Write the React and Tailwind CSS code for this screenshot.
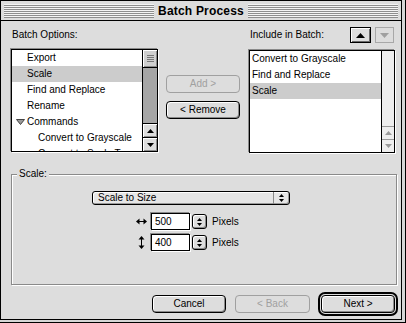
import React from "react";

const TriUp = ({ c = "#000", w = 7, h = 4 }) => (
  <svg width={w} height={h} viewBox={`0 0 ${w} ${h}`} className="block">
    <path d={`M0 ${h}L${w / 2} 0L${w} ${h}Z`} fill={c} />
  </svg>
);
const TriDown = ({ c = "#000", w = 7, h = 4 }) => (
  <svg width={w} height={h} viewBox={`0 0 ${w} ${h}`} className="block">
    <path d={`M0 0L${w} 0L${w / 2} ${h}Z`} fill={c} />
  </svg>
);

const UpDown = ({ c = "#000" }) => (
  <div className="flex flex-col items-center gap-[2px]">
    <TriUp c={c} w={5} h={3} />
    <TriDown c={c} w={5} h={3} />
  </div>
);

const Button = ({ children, disabled, className = "" }) => (
  <div
    className={
      "h-[18px] rounded-[4px] border flex items-center justify-center " +
      (disabled
        ? "border-[#a0a0a0] text-[#a0a0a0] bg-[#dddddd] "
        : "border-black text-black bg-[#dddddd] shadow-[inset_1px_1px_0_#ffffff,inset_-1px_-1px_0_#8a8a8a] ") +
      className
    }
  >
    {children}
  </div>
);

function LeftList() {
  const rows = [
    { t: "Export", pl: "pl-[15px]" },
    { t: "Scale", pl: "pl-[15px]", sel: true },
    { t: "Find and Replace", pl: "pl-[15px]" },
    { t: "Rename", pl: "pl-[15px]" },
    { t: "Commands", pl: "pl-[4px]", tri: true },
    { t: "Convert to Grayscale", pl: "pl-[26px]" },
    { t: "Convert to Scale To", pl: "pl-[26px]" },
  ];
  return (
    <div className="w-[147px] h-[103px] border border-black bg-white flex shadow-[-1px_-1px_0_#8a8a8a,1px_1px_0_#ffffff]">
      <div className="flex-1 overflow-hidden">
        {rows.map((r) => (
          <div
            key={r.t}
            className={
              "h-[16px] flex items-center whitespace-nowrap " +
              r.pl +
              (r.sel ? " bg-[#cccccc]" : "")
            }
          >
            {r.tri && (
              <svg width="9" height="6" viewBox="0 0 9 6" className="block mr-[2px]">
                <path d="M0.5 0.5L8.5 0.5L4.5 5.5Z" fill="#9a9a9a" stroke="#444" strokeWidth="1" />
              </svg>
            )}
            {r.t}
          </div>
        ))}
      </div>
      <div className="w-[15px] border-l border-black flex flex-col bg-[#a6a6a6]">
        <div className="h-[18px] border-b border-black bg-[#cfcfcf] shadow-[inset_1px_1px_0_#ffffff,inset_-1px_-1px_0_#8a8a8a] flex flex-col items-center justify-center gap-[1px]">
          <div className="w-[7px] h-[1px] bg-[#777]" />
          <div className="w-[7px] h-[1px] bg-[#777]" />
          <div className="w-[7px] h-[1px] bg-[#777]" />
          <div className="w-[7px] h-[1px] bg-[#777]" />
        </div>
        <div className="flex-1" />
        <div className="h-[14px] border-t border-black bg-[#dddddd] shadow-[inset_1px_1px_0_#ffffff,inset_-1px_-1px_0_#8a8a8a] flex items-center justify-center">
          <TriUp />
        </div>
        <div className="h-[14px] border-t border-black bg-[#dddddd] shadow-[inset_1px_1px_0_#ffffff,inset_-1px_-1px_0_#8a8a8a] flex items-center justify-center">
          <TriDown />
        </div>
      </div>
    </div>
  );
}

function RightList() {
  const rows = [
    { t: "Convert to Grayscale" },
    { t: "Find and Replace" },
    { t: "Scale", sel: true },
  ];
  return (
    <div className="w-[146px] h-[103px] border border-black bg-white flex shadow-[-1px_-1px_0_#8a8a8a,1px_1px_0_#ffffff]">
      <div className="flex-1 overflow-hidden">
        {rows.map((r) => (
          <div
            key={r.t}
            className={
              "h-[16px] flex items-center whitespace-nowrap pl-[2px]" +
              (r.sel ? " bg-[#cccccc]" : "")
            }
          >
            {r.t}
          </div>
        ))}
      </div>
      <div className="w-[13px] border-l border-black flex flex-col bg-[#eeeeee]">
        <div className="flex-1" />
        <div className="h-[13px] border-t border-[#9a9a9a] flex items-center justify-center">
          <TriUp c="#9a9a9a" />
        </div>
        <div className="h-[13px] border-t border-[#9a9a9a] flex items-center justify-center">
          <TriDown c="#9a9a9a" />
        </div>
      </div>
    </div>
  );
}

function NumRow({ icon, value, className = "" }) {
  return (
    <div className={"flex items-center h-[17px] ml-[123px] " + className}>
      <div className="w-[12px] flex items-center justify-center">{icon}</div>
      <div className="ml-[4px] w-[39px] h-[17px] border border-black bg-white flex items-center pl-[3px] shadow-[-1px_-1px_0_#8a8a8a,1px_1px_0_#ffffff]">
        {value}
      </div>
      <div className="ml-[2px] w-[15px] h-[15px] rounded-[3px] border border-black bg-[#dddddd] shadow-[inset_1px_1px_0_#ffffff,inset_-1px_-1px_0_#8a8a8a] flex items-center justify-center">
        <UpDown />
      </div>
      <div className="ml-[5px]">Pixels</div>
    </div>
  );
}

const HArrow = (
  <svg width="11" height="7" viewBox="0 0 11 7" className="block">
    <path d="M3 3.5H8" stroke="#000" strokeWidth="1" />
    <path d="M0 3.5L3.5 0.5V6.5Z" fill="#000" />
    <path d="M11 3.5L7.5 0.5V6.5Z" fill="#000" />
  </svg>
);
const VArrow = (
  <svg width="7" height="13" viewBox="0 0 7 13" className="block">
    <path d="M3.5 3V10" stroke="#000" strokeWidth="1" />
    <path d="M3.5 0L0.5 3.5H6.5Z" fill="#000" />
    <path d="M3.5 13L0.5 9.5H6.5Z" fill="#000" />
  </svg>
);

export default function App() {
  const stripes =
    "flex-1 h-[14px] bg-[repeating-linear-gradient(to_bottom,#f4f4f4_0px,#f4f4f4_1px,#8e8e8e_1px,#8e8e8e_2px)]";
  return (
    <div className="w-[406px] h-[323px] bg-[#d6d6d6] border-r border-b border-black font-['Liberation_Sans',Arial,sans-serif] text-[10px] leading-[12px] text-black overflow-hidden">
      <div className="w-[402px] h-[320px] border border-black bg-[#dddddd] flex flex-col">
        {/* title bar */}
        <div className="h-[20px] border-b border-black flex items-center px-[3px] gap-[4px] bg-[#dddddd]">
          <div className={stripes} />
          <div className="text-[12px] leading-[14px] font-bold tracking-[0.2px]">Batch Process</div>
          <div className={stripes} />
        </div>

        {/* content */}
        <div className="flex flex-col pl-[10px]">
          <div className="flex items-start">
            {/* left column */}
            <div className="flex flex-col">
              <div className="h-[28px] pt-[8px] pl-[1px]">Batch Options:</div>
              <LeftList />
            </div>
            {/* middle column */}
            <div className="ml-[8px] w-[74px] pt-[54px] flex flex-col gap-[8px]">
              <Button disabled>Add &gt;</Button>
              <Button>&lt; Remove</Button>
            </div>
            {/* right column */}
            <div className="ml-[9px] flex flex-col">
              <div className="h-[29px] pt-[6px] flex items-start justify-between pr-[1px]">
                <div className="pl-[1px] pt-[2px]">Include in Batch:</div>
                <div className="flex gap-[4px]">
                  <div className="w-[21px] h-[16px] border border-black bg-[#dddddd] shadow-[inset_1px_1px_0_#ffffff,inset_-1px_-1px_0_#6a6a6a] flex items-center justify-center">
                    <TriUp w={9} h={5} />
                  </div>
                  <div className="w-[19px] h-[16px] border border-[#a8a8a8] bg-[#dddddd] flex items-center justify-center">
                    <TriDown c="#a0a0a0" w={9} h={5} />
                  </div>
                </div>
              </div>
              <RightList />
            </div>
          </div>

          {/* group box */}
          <div className="mt-[21px] w-[386px] h-[111px] border border-[#8a8a8a] shadow-[inset_1px_1px_0_#ffffff,1px_1px_0_#ffffff] flex flex-col">
            <div className="-mt-[7px] ml-[5px] self-start px-[2px] bg-[#dddddd] leading-[12px]">Scale:</div>
            <div className="mt-[11px] ml-[80px] w-[198px] h-[14px] rounded-[3px] border border-black bg-[#e6e6e6] shadow-[inset_1px_1px_0_#ffffff,inset_-1px_-1px_0_#9a9a9a] flex items-center">
              <div className="flex-1 pl-[5px]">Scale to Size</div>
              <div className="w-[16px] h-full border-l border-[#8a8a8a] flex items-center justify-center">
                <UpDown />
              </div>
            </div>
            <NumRow icon={HArrow} value="500" className="mt-[8px]" />
            <NumRow icon={VArrow} value="400" className="mt-[4px]" />
          </div>

          {/* bottom buttons */}
          <div className="mt-[7px] flex items-center h-[24px] pl-[141px]">
            <Button className="w-[74px]">Cancel</Button>
            <Button disabled className="w-[75px] ml-[9px]">
              &lt; Back
            </Button>
            <div className="ml-[8px] w-[80px] h-[24px] rounded-[7px] border-2 border-black p-[1px]">
              <Button className="w-full">Next &gt;</Button>
            </div>
          </div>
        </div>
      </div>
    </div>
  );
}
